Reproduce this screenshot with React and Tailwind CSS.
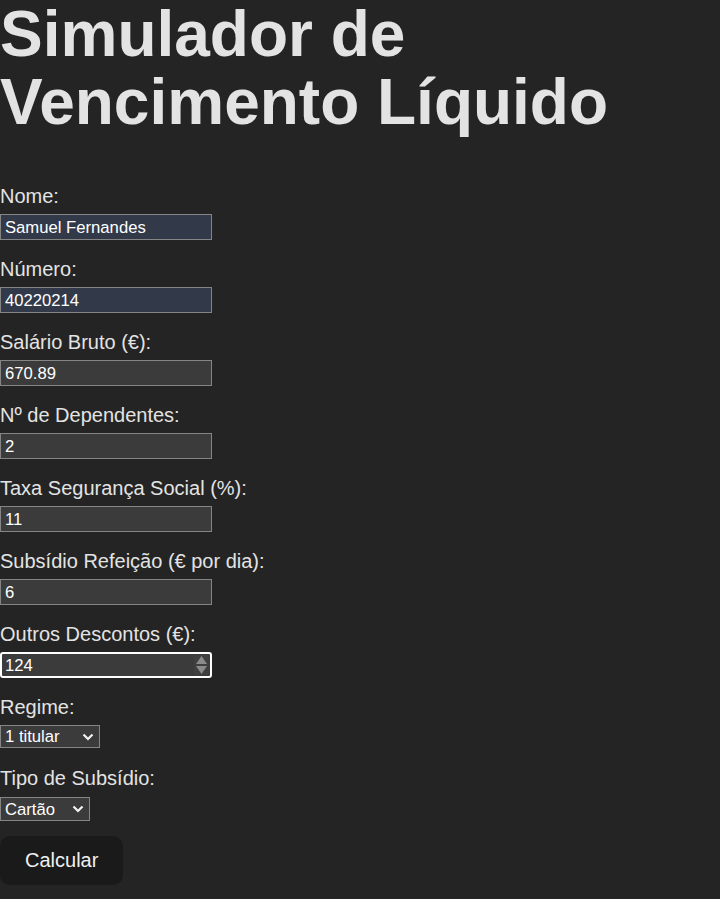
import { useState } from 'react'

const fields = [
  { id: 'nome', label: 'Nome:', value: 'Samuel Fernandes', filled: true },
  { id: 'numero', label: 'Número:', value: '40220214', filled: true },
  { id: 'bruto', label: 'Salário Bruto (€):', value: '670.89' },
  { id: 'dependentes', label: 'Nº de Dependentes:', value: '2' },
  { id: 'taxa', label: 'Taxa Segurança Social (%):', value: '11' },
  { id: 'refeicao', label: 'Subsídio Refeição (€ por dia):', value: '6' },
  { id: 'outros', label: 'Outros Descontos (€):', value: '124', focused: true },
]

function Chevron() {
  return (
    <svg
      className="pointer-events-none absolute right-[6px] top-1/2 -translate-y-1/2"
      width="12"
      height="8"
      viewBox="0 0 12 8"
      fill="none"
    >
      <path d="M1.5 1.5 6 6l4.5-4.5" stroke="#f2f2f2" strokeWidth="2.2" />
    </svg>
  )
}

function Spinner() {
  return (
    <span className="pointer-events-none absolute right-[3px] top-[3px] bottom-[3px] flex w-[15px] flex-col items-center justify-center gap-[2px] bg-[#3f3f3f]">
      <svg width="11" height="8" viewBox="0 0 11 8">
        <path d="M5.5 0 11 8H0z" fill="#8a8a8a" />
      </svg>
      <svg width="11" height="8" viewBox="0 0 11 8">
        <path d="M0 0h11L5.5 8z" fill="#8a8a8a" />
      </svg>
    </span>
  )
}

export default function App() {
  const [values, setValues] = useState(
    Object.fromEntries(fields.map((f) => [f.id, f.value]))
  )
  const [regime, setRegime] = useState('1')
  const [tipo, setTipo] = useState('cartao')

  return (
    <div className="min-h-[899px] bg-[#242424] text-[#e3e3e3] font-['Liberation_Sans',Arial,sans-serif] [color-scheme:dark]">
      <h1 className="text-[64px] font-bold leading-[68px]">
        Simulador de
        <br />
        Vencimento Líquido
      </h1>

      <form className="mt-[49px]" onSubmit={(e) => e.preventDefault()}>
        {fields.map((f) => (
          <div key={f.id} className="mb-[18px]">
            <label htmlFor={f.id} className="block text-[20px] leading-[23px]">
              {f.label}
            </label>
            <div className="relative mt-[6px] w-[212px]">
              <input
                id={f.id}
                type="text"
                value={values[f.id]}
                onChange={(e) => setValues({ ...values, [f.id]: e.target.value })}
                className={
                  f.focused
                    ? 'block h-[26px] w-[212px] rounded-[3px] border-2 border-white bg-[#3b3b3b] px-[3px] pt-[2px] text-[16.67px] text-white outline-none'
                    : f.filled
                    ? 'block h-[26px] w-[212px] border border-[#858585] bg-[#323a4a] px-[4px] pt-[2px] text-[16.67px] text-white outline-none'
                    : 'block h-[26px] w-[212px] border border-[#858585] bg-[#3b3b3b] px-[4px] pt-[2px] text-[16.67px] text-white outline-none'
                }
              />
              {f.focused && <Spinner />}
            </div>
          </div>
        ))}

        <div className="mb-[19px]">
          <label htmlFor="regime" className="block text-[20px] leading-[23px]">
            Regime:
          </label>
          <div className="relative mt-[6px] w-[100px]">
            <select
              id="regime"
              value={regime}
              onChange={(e) => setRegime(e.target.value)}
              className="block h-[23px] w-[100px] appearance-none border border-[#858585] bg-[#3b3b3b] pl-[4px] pt-[1px] text-[16.67px] leading-[20px] text-white outline-none"
            >
              <option value="1">1 titular</option>
              <option value="2">2 titulares</option>
            </select>
            <Chevron />
          </div>
        </div>

        <div className="mb-[15px]">
          <label htmlFor="tipo" className="block text-[20px] leading-[23px]">
            Tipo de Subsídio:
          </label>
          <div className="relative mt-[7px] w-[90px]">
            <select
              id="tipo"
              value={tipo}
              onChange={(e) => setTipo(e.target.value)}
              className="block h-[24px] w-[90px] appearance-none border border-[#858585] bg-[#3b3b3b] pl-[4px] pt-[1px] text-[16.67px] leading-[20px] text-white outline-none"
            >
              <option value="cartao">Cartão</option>
              <option value="dinheiro">Dinheiro</option>
            </select>
            <Chevron />
          </div>
        </div>

        <button
          type="submit"
          className="rounded-[10px] border border-transparent bg-[#1a1a1a] px-[24px] py-[12px] text-[20px] leading-[23px] font-medium text-[#f0f0f0]"
        >
          Calcular
        </button>
      </form>
    </div>
  )
}
